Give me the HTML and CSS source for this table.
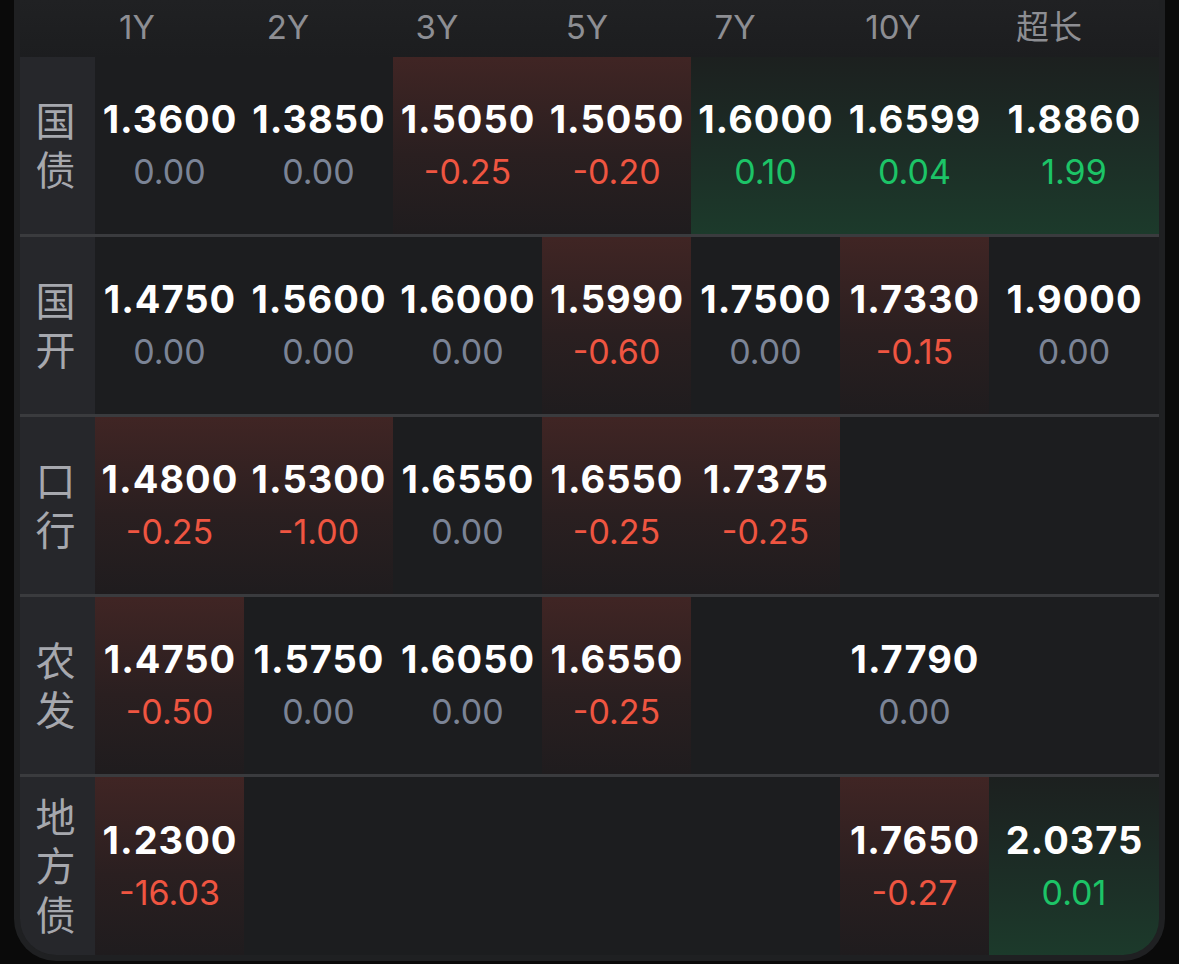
FILE: index.html
```html
<!DOCTYPE html>
<html lang="zh-CN">
<head>
    <meta charset="UTF-8">
    <meta name="viewport" content="width=device-width, initial-scale=1.0">
    <title>利率债收益率</title>
    <link rel="stylesheet" href="styles.css">
</head>
<body>
    <div class="frame">
        <div class="board">
            <div class="head">
                <div></div>
                <div class="head-cell">1Y</div>
                <div class="head-cell">2Y</div>
                <div class="head-cell">3Y</div>
                <div class="head-cell">5Y</div>
                <div class="head-cell">7Y</div>
                <div class="head-cell">10Y</div>
                <div class="head-cell">超长</div>
            </div>

            <!-- 国债 -->
            <div class="row">
                <div class="label">国<br>债</div>
                <div class="cell"><b>1.3600</b><span>0.00</span></div>
                <div class="cell"><b>1.3850</b><span>0.00</span></div>
                <div class="cell neg"><b>1.5050</b><span>-0.25</span></div>
                <div class="cell neg"><b>1.5050</b><span>-0.20</span></div>
                <div class="cell pos"><b>1.6000</b><span>0.10</span></div>
                <div class="cell pos"><b>1.6599</b><span>0.04</span></div>
                <div class="cell pos"><b>1.8860</b><span>1.99</span></div>
            </div>

            <!-- 国开 -->
            <div class="row">
                <div class="label">国<br>开</div>
                <div class="cell"><b>1.4750</b><span>0.00</span></div>
                <div class="cell"><b>1.5600</b><span>0.00</span></div>
                <div class="cell"><b>1.6000</b><span>0.00</span></div>
                <div class="cell neg"><b>1.5990</b><span>-0.60</span></div>
                <div class="cell"><b>1.7500</b><span>0.00</span></div>
                <div class="cell neg"><b>1.7330</b><span>-0.15</span></div>
                <div class="cell"><b>1.9000</b><span>0.00</span></div>
            </div>

            <!-- 口行 -->
            <div class="row">
                <div class="label">口<br>行</div>
                <div class="cell neg"><b>1.4800</b><span>-0.25</span></div>
                <div class="cell neg"><b>1.5300</b><span>-1.00</span></div>
                <div class="cell"><b>1.6550</b><span>0.00</span></div>
                <div class="cell neg"><b>1.6550</b><span>-0.25</span></div>
                <div class="cell neg"><b>1.7375</b><span>-0.25</span></div>
                <div class="cell"></div>
                <div class="cell"></div>
            </div>

            <!-- 农发 -->
            <div class="row">
                <div class="label">农<br>发</div>
                <div class="cell neg"><b>1.4750</b><span>-0.50</span></div>
                <div class="cell"><b>1.5750</b><span>0.00</span></div>
                <div class="cell"><b>1.6050</b><span>0.00</span></div>
                <div class="cell neg"><b>1.6550</b><span>-0.25</span></div>
                <div class="cell"></div>
                <div class="cell"><b>1.7790</b><span>0.00</span></div>
                <div class="cell"></div>
            </div>

            <!-- 地方债 -->
            <div class="row last">
                <div class="label">地<br>方<br>债</div>
                <div class="cell neg"><b>1.2300</b><span>-16.03</span></div>
                <div class="cell"></div>
                <div class="cell"></div>
                <div class="cell"></div>
                <div class="cell"></div>
                <div class="cell neg"><b>1.7650</b><span>-0.27</span></div>
                <div class="cell pos"><b>2.0375</b><span>0.01</span></div>
            </div>
        </div>
    </div>
</body>
</html>
```

FILE: styles.css
```css
body {
    margin: 0;
    padding: 0;
    background-color: #0a0a0a;
    font-family: Inter, "Noto Sans CJK SC", sans-serif;
}

.frame {
    width: 1139px;
    margin-left: 14px;
    padding: 0 6px 6px 6px;
    background-color: #1f2022;
    border-radius: 0 0 42px 42px;
}

.board {
    background-color: #1c1d1f;
    border-radius: 0 0 36px 36px;
    overflow: hidden;
}

.head {
    display: grid;
    grid-template-columns: 43px 148px 154px 144px 156px 140px 176px 136px;
    height: 57px;
    align-items: center;
    background: linear-gradient(to bottom, #202123, #1c1d1f);
}

.head-cell {
    text-align: center;
    font-size: 33px;
    color: #8d8e93;
    line-height: 40px;
    margin-top: -4px;
}

.row {
    display: grid;
    grid-template-columns: 75px repeat(6, 149px) 1fr;
    height: 177px;
}

.row + .row {
    border-top: 3px solid #3a3b3e;
}

.row.last {
    height: 178px;
}

.label {
    background-color: #26272b;
    color: #a6a8ae;
    font-size: 40px;
    line-height: 49px;
    display: flex;
    align-items: center;
    justify-content: center;
    text-align: center;
    padding-right: 4px;
}

.cell {
    display: flex;
    flex-direction: column;
    justify-content: center;
    align-items: center;
}

.cell b {
    font-size: 38px;
    font-weight: 700;
    line-height: 50px;
    color: #ffffff;
    letter-spacing: 1px;
    margin-right: -1px;
}

.cell span {
    font-size: 34px;
    line-height: 50px;
    color: #7b8496;
    margin-top: 3px;
}

.cell.neg {
    background: linear-gradient(to bottom, #402524, #2a1f20 55%, #1f1c1e);
}

.cell.neg span {
    color: #ef5541;
}

.cell.pos {
    background: linear-gradient(to bottom, #1c201f, #1c2b25 45%, #1c3a2b);
}

.cell.pos span {
    color: #1cc467;
}
```
